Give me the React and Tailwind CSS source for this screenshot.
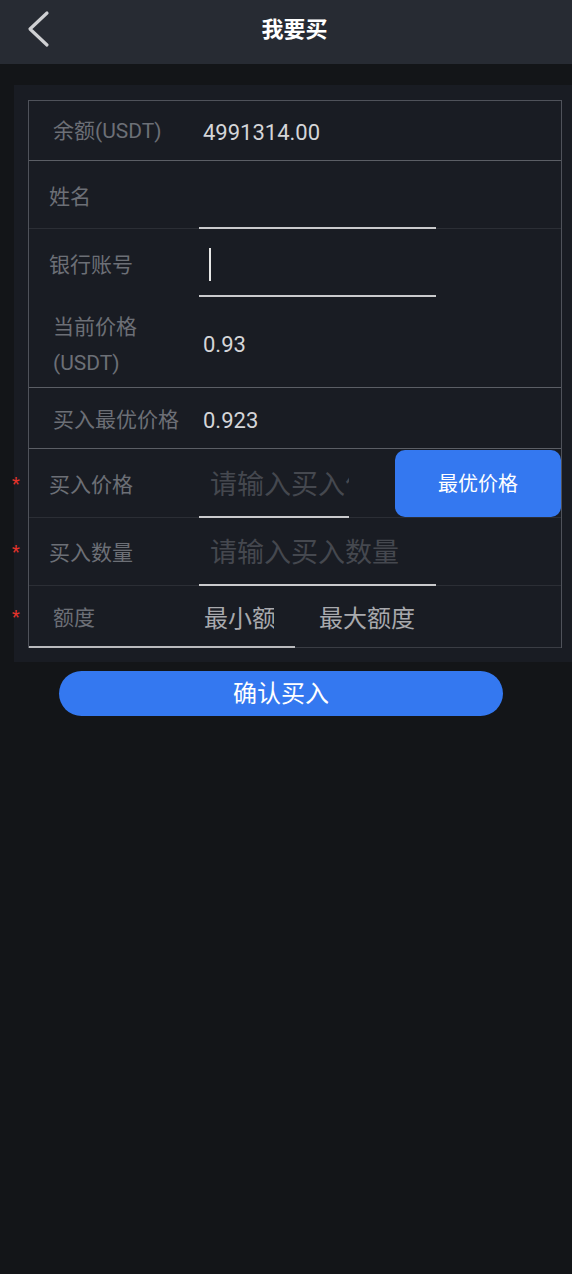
import React, { useState } from 'react';

const FONT = "font-['Roboto','Noto_Sans_CJK_SC',sans-serif]";

function Star() {
  return (
    <span className="absolute left-[-17px] top-1/2 -translate-y-1/2 text-[18px] leading-none text-[#e5332a]">*</span>
  );
}

function App() {
  const [name, setName] = useState('');
  const [account, setAccount] = useState('');
  const [price, setPrice] = useState('');
  const [amount, setAmount] = useState('');

  return (
    <div className={`min-h-screen bg-[#131518] ${FONT}`}>
      <header className="relative flex h-16 items-center justify-center bg-[#272b33]">
        <button className="absolute left-[26px] top-[10px] p-0">
          <svg width="26" height="38" viewBox="0 0 26 38" fill="none">
            <path d="M21 3 L4 19 L21 35" stroke="#cfd0d3" strokeWidth="3.2" strokeLinecap="round" strokeLinejoin="round" />
          </svg>
        </button>
        <h1 className="pl-[17px] pb-[6px] text-[22px] font-bold text-white">我要买</h1>
      </header>

      <div className="pt-[21px]">
        <div className="ml-[14px] bg-[#191c23] pb-[14px] pl-[14px] pr-[10px] pt-[15px]">
          <div className="border-l border-r border-t border-[#4f525a]">
            {/* balance */}
            <div className="flex h-[60px] items-center border-b border-[#5b5e65] pt-[3px]">
              <div className="w-[170px] pl-[24px] text-[21px] text-[#6c6f76]">余额(USDT)</div>
              <div className="pl-[4px] text-[22px] text-[#d4d5d8]">4991314.00</div>
            </div>

            {/* name */}
            <div className="flex h-[68px]">
              <div className="flex w-[170px] items-center border-b border-[#2b2e35] pl-[20px] pt-[6px] text-[21px] text-[#6c6f76]">姓名</div>
              <div className="flex w-[237px] items-center border-b-2 border-[#c9cacc] pt-[6px]">
                <input
                  value={name}
                  onChange={(e) => setName(e.target.value)}
                  className="w-full bg-transparent pl-[10px] text-[22px] text-[#d4d5d8] outline-none"
                />
              </div>
              <div className="flex-1 border-b border-[#2b2e35]" />
            </div>

            {/* bank account */}
            <div className="flex h-[68px]">
              <div className="flex w-[170px] items-center pl-[20px] pt-[6px] text-[21px] text-[#6c6f76]">银行账号</div>
              <div className="flex w-[237px] items-center border-b-2 border-[#c9cacc] pt-[4px]">
                <span className="ml-[10px] h-[33px] w-[2px] bg-[#e6e6e6]" />
                <input
                  value={account}
                  onChange={(e) => setAccount(e.target.value)}
                  className="w-full bg-transparent text-[22px] text-[#d4d5d8] outline-none"
                />
              </div>
            </div>

            {/* current price */}
            <div className="flex h-[91px] items-center border-b border-[#5b5e65] pt-[5px]">
              <div className="w-[170px] pl-[24px] text-[21px] leading-[36px] text-[#6c6f76]">
                当前价格
                <br />
                (USDT)
              </div>
              <div className="pl-[4px] text-[22px] text-[#d4d5d8]">0.93</div>
            </div>

            {/* best price */}
            <div className="flex h-[61px] items-center border-b border-[#5b5e65] pt-[5px]">
              <div className="w-[170px] pl-[24px] text-[21px] text-[#6c6f76]">买入最优价格</div>
              <div className="pl-[4px] text-[22px] text-[#d4d5d8]">0.923</div>
            </div>

            {/* buy price */}
            <div className="relative flex h-[69px]">
              <Star />
              <div className="flex w-[170px] items-center border-b border-[#2b2e35] pl-[20px] pt-[5px] text-[21px] text-[#6c6f76]">买入价格</div>
              <div className="flex w-[150px] items-center overflow-hidden border-b-2 border-[#c9cacc] pt-[5px]">
                <input
                  value={price}
                  onChange={(e) => setPrice(e.target.value)}
                  placeholder="请输入买入价格"
                  className="w-full bg-transparent pl-[11px] text-[27px] text-[#d4d5d8] outline-none placeholder:text-[#45484f]"
                />
              </div>
              <div className="w-[46px] border-b border-[#2b2e35]" />
              <div className="flex flex-1 items-start border-b border-[#2b2e35]">
                <button className="mt-px flex h-[67px] w-full items-center justify-center rounded-[10px] bg-[#3478f0] text-[20px] text-white">
                  最优价格
                </button>
              </div>
            </div>

            {/* buy amount */}
            <div className="relative flex h-[68px]">
              <Star />
              <div className="flex w-[170px] items-center border-b border-[#2b2e35] pl-[20px] pt-[5px] text-[21px] text-[#6c6f76]">买入数量</div>
              <div className="flex w-[237px] items-center border-b-2 border-[#c9cacc] pt-[5px]">
                <input
                  value={amount}
                  onChange={(e) => setAmount(e.target.value)}
                  placeholder="请输入买入数量"
                  className="w-full bg-transparent pl-[11px] text-[27px] text-[#d4d5d8] outline-none placeholder:text-[#45484f]"
                />
              </div>
              <div className="flex-1 border-b border-[#2b2e35]" />
            </div>

            {/* limits */}
            <div className="relative flex h-[62px]">
              <Star />
              <div className="flex w-[170px] items-center border-b-2 border-[#b9babd] pl-[24px] pt-[5px] text-[21px] text-[#6c6f76]">额度</div>
              <div className="flex w-[96px] items-center overflow-hidden border-b-2 border-[#b9babd] pl-[5px] pt-[5px]">
                <input
                  placeholder="最小额度"
                  className="w-[70px] bg-transparent text-[24px] text-[#d4d5d8] outline-none placeholder:text-[#a8a9ad]"
                />
              </div>
              <div className="flex flex-1 items-center border-b border-[#3a3d44] pl-[24px] pt-[5px]">
                <input
                  placeholder="最大额度"
                  className="w-full bg-transparent text-[24px] text-[#d4d5d8] outline-none placeholder:text-[#a8a9ad]"
                />
              </div>
            </div>
          </div>
        </div>

        <button className="ml-[59px] mt-[9px] flex h-[45px] w-[444px] items-center justify-center rounded-full bg-[#3478f0] text-[24px] text-white">
          确认买入
        </button>
      </div>
    </div>
  );
}

export default App;
